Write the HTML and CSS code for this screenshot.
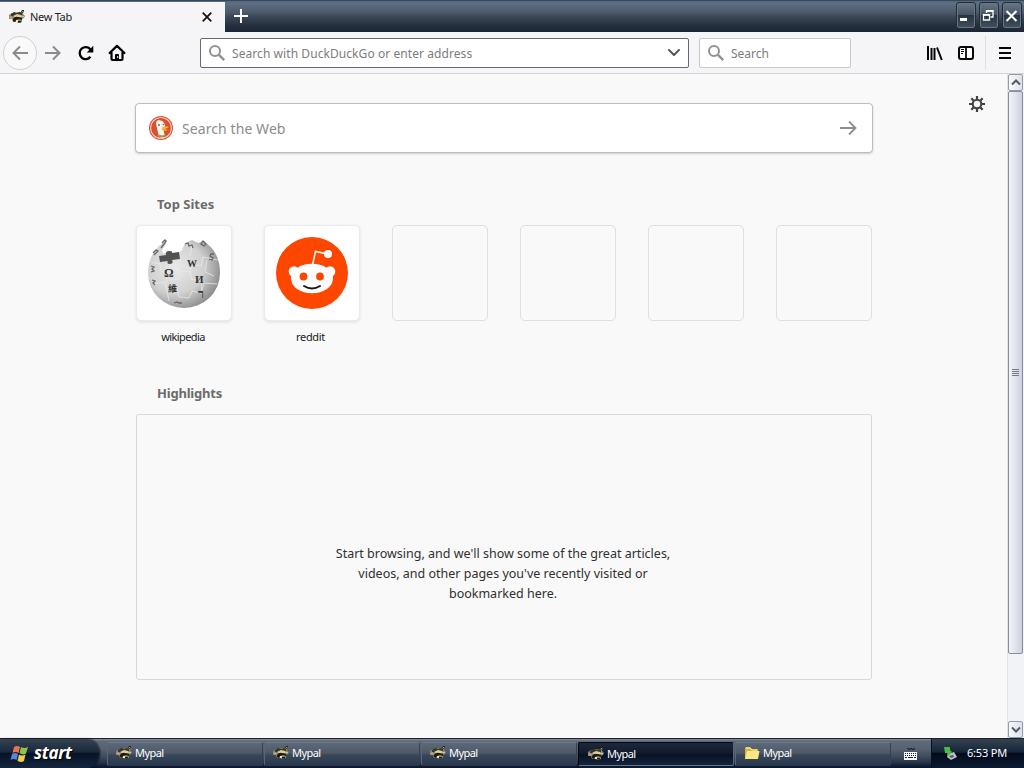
FILE: index.html
```html
<!DOCTYPE html>
<html lang="en">
<head>
<meta charset="utf-8">
<title>New Tab</title>
<link rel="stylesheet" href="styles.css">
</head>
<body>
<svg class="defs" width="0" height="0">
  <symbol id="mypal" viewBox="0 0 16 16">
    <path d="M0 6l3-2 3 0 3-1 3 0 2-2 1 0-1 4 2 2-1 2-2 1 0 3-3 1-3-1-3 0-1-3-3 0-1-2z" fill="#8a8768"/>
    <path d="M2 5l3-2 3 1 3-1 2 1 0 2-4 0-4 1-3 1z" fill="#3a382b"/>
    <path d="M4 7l4-2 4 1 1 2-3 0-3 1z" fill="#dccf98"/>
    <path d="M0 8l3-1 1 2-2 1z" fill="#c3a18c"/>
    <path d="M4 10q2-3 5-2l4 1 0 2-3-1-3 1-1 2-2-1zM9 12h3v1.500H9zM12 3l1-2 2 0-1 3z" fill="#1b1a13"/>
    <path d="M7 11h2v2H7zM13 7l2 0-1 1.500zM13 2l1 0-.5 1.500z" fill="#f0e6bd"/>
  </symbol>
  <symbol id="search" viewBox="0 0 18 18"><circle cx="7" cy="7" r="5" fill="none" stroke="#919191" stroke-width="2"/><path d="M10.7 10.7l5.5 5.500" stroke="#919191" stroke-width="2.4"/></symbol>
</svg>
<div class="window">
  <header class="titlebar">
    <div class="tab">
      <svg class="fav" width="16" height="16"><use href="#mypal"/></svg>
      <span class="tab-title">New Tab</span>
      <svg class="tab-close" width="10" height="10" viewBox="0 0 10 10"><path d="M.7.7l8.6 8.6M9.3.7L.7 9.3" stroke="#111" stroke-width="1.7"/></svg>
    </div>
    <svg class="new-tab" width="14" height="14" viewBox="0 0 14 14"><path d="M7 0v14M0 7h14" stroke="#fff" stroke-width="1.9"/></svg>
    <div class="controls">
      <span class="control"><svg width="18" height="26" viewBox="0 0 18 26"><path d="M3 15h7v3H3z" fill="#fff"/></svg></span>
      <span class="control"><svg width="18" height="26" viewBox="0 0 18 26"><path d="M6.500 10V8H13v6h-2.500M3.500 12v5h6v-5z" fill="none" stroke="#fff" stroke-width="1.300"/><path d="M2.900 11h7.200v1.600H2.900zM5.900 7h7.600v1.600H5.900z" fill="#fff"/></svg></span>
      <span class="control"><svg width="18" height="26" viewBox="0 0 18 26"><path d="M3.500 8l10 10M13.500 8l-10 10" stroke="#fff" stroke-width="2.100"/></svg></span>
    </div>
  </header>
  <nav class="toolbar">
    <span class="back"><svg width="16" height="16" viewBox="0 0 16 16"><path d="M16 8H1.500M8 1.500L1.500 8 8 14.500" fill="none" stroke="#8b8b8c" stroke-width="2"/></svg></span>
    <svg class="forward" width="16" height="16" viewBox="0 0 16 16"><path d="M0 8h14.500M8 1.500L14.500 8 8 14.500" fill="none" stroke="#8b8b8c" stroke-width="2"/></svg>
    <svg class="reload" width="16" height="16" viewBox="0 0 16 16"><path d="M12.500 11.700A6 6 0 1 1 12.500 4.500" fill="none" stroke="#000" stroke-width="2.300"/><path d="M15.300.8v6.700H8.800z"/></svg>
    <svg class="home" width="18" height="18" viewBox="0 0 18 18"><path d="M1.600 9L9 1.900 16.400 9M3.500 8.500V15q0 1 1 1h9q1 0 1-1V8.500" fill="none" stroke="#000" stroke-width="2.200" stroke-linecap="round" stroke-linejoin="round"/><path d="M7 16v-5q0-1 1-1h2q1 0 1 1v5z"/><path d="M9.200 12h1v2h-1z" fill="#fff"/></svg>
    <div class="urlbar">
      <svg width="18" height="18"><use href="#search"/></svg>
      <span class="url-text">Search with DuckDuckGo or enter address</span>
      <svg class="chev" width="12" height="8" viewBox="0 0 12 8"><path d="M1 1l5 5 5-5" fill="none" stroke="#555" stroke-width="1.900" stroke-linecap="round" stroke-linejoin="round"/></svg>
    </div>
    <div class="searchbar">
      <svg width="18" height="18"><use href="#search"/></svg>
      <span class="search-text">Search</span>
    </div>
    <svg class="library" width="16" height="16" viewBox="0 0 16 16"><path d="M1 1v14M4.500 3v12M7.500 3v12M10 2.500L14.800 15" stroke="#080808" stroke-width="2"/></svg>
    <svg class="sidebar-icon" width="16" height="14" viewBox="0 0 16 14"><rect x="1" y="1" width="14" height="12" rx="2" fill="#fff" stroke="#080808" stroke-width="2"/><path d="M8 1v12" stroke="#080808" stroke-width="1.800"/><path d="M3 3.500h3M3 5.500h3M3 7.500h2" stroke="#080808"/></svg>
    <span class="sep"></span>
    <svg class="burger" width="12" height="12" viewBox="0 0 12 12"><path d="M0 1h12M0 6h12M0 11h12" stroke="#050505" stroke-width="2"/></svg>
  </nav>
  <div class="viewport">
    <main class="page">
      <svg class="gear" width="16" height="16" viewBox="0 0 16 16"><circle cx="8" cy="8" r="4.300" fill="none" stroke="#424246" stroke-width="2.100"/><path d="M8 0v3M8 13v3M0 8h3M13 8h3M2.300 2.300l2.200 2.200M11.500 11.500l2.200 2.200M13.700 2.300l-2.200 2.200M4.500 11.500l-2.200 2.200" stroke="#424246" stroke-width="2.200"/></svg>
      <div class="web-search">
        <svg width="24" height="24" viewBox="0 0 24 24"><circle cx="12" cy="12" r="12" fill="#d9563a"/><circle cx="12" cy="12" r="10.800" fill="#f7d9cf"/><circle cx="12" cy="12" r="9.900" fill="#d9502f"/><path d="M10 21L7.500 10Q6 5 9.500 4l4 1q2.500 2 2.500 6l-1.500 3 1.500 7q-3 1.500-6 0z" fill="#f4f3e9"/><path d="M13 11.500q4-2 7-.5l-4 2 3 1q-3 1.500-6 0z" fill="#f5b52c"/><path d="M10 18.500l3 1 4-1-1 2.500-3 0-3 0z" fill="#7ea457"/><circle cx="10" cy="9" r=".9" fill="#41678b"/><circle cx="14.300" cy="8.500" r=".7" fill="#41678b"/></svg>
        <span class="web-text">Search the Web</span>
        <svg class="go" width="18" height="16" viewBox="0 0 18 16"><path d="M0 8h15.500M9 1.500L15.500 8 9 14.500" fill="none" stroke="#8d8d8f" stroke-width="1.800"/></svg>
      </div>
      <h2 class="heading sites-heading"><span>Top Sites</span></h2>
      <div class="sites">
        <div class="site"><div class="tile filled">
          <svg width="74" height="74" viewBox="0 0 74 74">
            <defs><radialGradient id="globe" cx=".38" cy=".4" r=".65"><stop offset="0" stop-color="#e9e9e9"/><stop offset=".6" stop-color="#d0d0d0"/><stop offset="1" stop-color="#8d8d8d"/></radialGradient></defs>
            <path d="M20 4L12 10Q1 21 1 37a36 35 0 0 0 72 0Q73 15 56 5l-5 2-6-3-7 3-3 7-3 3-16 0-1-3 4-6z" fill="url(#globe)"/>
            <path d="M4 26l9 2 1 7 8 1 1 8 9-1 2-8 9 1 2-8 9 2 2-9 15 3M6 48l11-2 3 8 10-2 2 9 10 1 3-7 9 2 3-10 13 1M32 22l2 8 9 2 1 11 10 2 1 13M21 36l-2 13 3 16M45 9l-2 11M60 24l-2 12 9 4" fill="none" stroke="#e9e9e9" stroke-width=".8"/>
            <path d="M12 20l7-1q-1-4 3-4 4 0 3 2l7-1 1 7-8 1q2 4-2 4-4 0-2-3l-8 1z" fill="#525252"/>
            <path d="M15 7l3-3 1 1-2 3-3 4M6 17l3-3 2 1-4 4M38 8l3-1 1 3 3-1 1 3M56 5l3 3-2 2-3-2zM67 18l-3 0-1 2 3 2-1 2-3-1M4 30l3 1-2 2 2 2-3 1M5 44l3 1-2 2 2 2M27 67l3-1 2 1 3 0" fill="none" stroke="#666" stroke-width="1.300"/>
            <g class="glyphs" fill="#343434"><text x="17" y="41" font-size="12">Ω</text><text x="40" y="31" font-size="10">W</text><text x="48" y="47" font-size="11">И</text><text x="51" y="62" font-size="12">ר</text><text class="cjk" x="21" y="56" font-size="9">維</text></g>
          </svg></div><span class="site-name">wikipedia</span></div>
        <div class="site"><div class="tile filled">
          <svg width="72" height="72" viewBox="0 0 72 72"><circle cx="36" cy="36" r="36" fill="#fd4701"/><g fill="#fff"><ellipse cx="36" cy="41.500" rx="21" ry="14.800"/><circle cx="18" cy="34.500" r="5.300"/><circle cx="54" cy="34.500" r="5.300"/><circle cx="52" cy="17" r="4"/></g><path d="M36.500 28l3-13.500 11 2.300" fill="none" stroke="#fff" stroke-width="1.500"/><circle cx="27.500" cy="39.500" r="3.900" fill="#fd4701"/><circle cx="44" cy="39.500" r="3.900" fill="#fd4701"/><path d="M28 49q8 5 16 0" fill="none" stroke="#171717" stroke-width="2" stroke-linecap="round"/></svg></div><span class="site-name">reddit</span></div>
        <div class="site"><div class="tile"></div></div>
        <div class="site"><div class="tile"></div></div>
        <div class="site"><div class="tile"></div></div>
        <div class="site"><div class="tile"></div></div>
      </div>
      <h2 class="heading high-heading"><span>Highlights</span></h2>
      <section class="empty"><p>Start browsing, and we'll show some of the great articles,<br>videos, and other pages you've recently visited or<br>bookmarked here.</p></section>
    </main>
    <aside class="scrollbar">
      <span class="arrow"><svg width="10" height="7" viewBox="0 0 10 7"><path d="M1 5.500l4-4 4 4" fill="none" stroke="#555a64" stroke-width="2"/></svg></span>
      <span class="thumb"><svg width="7" height="8" viewBox="0 0 7 8"><path d="M0 .5h7M0 2.500h7M0 4.500h7M0 6.500h7" stroke="#777b83"/></svg></span>
      <span class="track"></span>
      <span class="arrow"><svg width="10" height="7" viewBox="0 0 10 7"><path d="M1 1.500l4 4 4-4" fill="none" stroke="#555a64" stroke-width="2"/></svg></span>
    </aside>
  </div>
  <footer class="taskbar">
    <div class="start">
      <svg width="20" height="18" viewBox="0 0 20 18"><path d="M4 2q3-2 6 0L8.500 8q-3-2-6 0z" fill="#e9734e"/><path d="M11 2q3 2 7 0l-2 6.500q-3 2-6.500-.2z" fill="#8fc34e"/><path d="M2 9q3-2 6 0l-1.500 6q-3-2-6 0z" fill="#5788de"/><path d="M9 9.500q3 2 6.500 0L14 16q-3 2-6.500-.3z" fill="#edcf48"/></svg>
      <span>start</span>
    </div>
    <div class="tasks">
      <div class="task"><svg width="16" height="16"><use href="#mypal"/></svg><span>Mypal</span></div>
      <div class="task"><svg width="16" height="16"><use href="#mypal"/></svg><span>Mypal</span></div>
      <div class="task"><svg width="16" height="16"><use href="#mypal"/></svg><span>Mypal</span></div>
      <div class="task active"><svg width="16" height="16"><use href="#mypal"/></svg><span>Mypal</span></div>
      <div class="task"><svg width="16" height="16" viewBox="0 0 16 16"><path d="M1 3l1-1h4l2 2h6v10H1z" fill="#d6b443"/><path d="M1 14L3 6h12.500L14 14z" fill="#f8e783"/><path d="M2 3h4l2 2h5" fill="none" stroke="#fff3a2"/></svg><span>Mypal</span></div>
    </div>
    <svg class="keyboard" width="13" height="12" viewBox="0 0 13 12"><path d="M3 0l2 1.500 2-1 2 1 2-1" fill="none" stroke="#111"/><path d="M0 4h13v8H0z" fill="#f4f4f4"/><path d="M1 5.500h11M1 7.500h11" stroke="#222" stroke-dasharray="1 1"/><path d="M1 9.500h2M4 9.500h5M10 9.500h2" stroke="#222"/></svg>
    <div class="tray">
      <svg width="14" height="16" viewBox="0 0 14 16"><path d="M5 9l6-2 3 5-6 3-4-3z" fill="#b9c0bd"/><path d="M6 11l4-1 1 2-3 1z" fill="#555f61"/><path d="M1 2l6 0 0 3 2 2-4 4-1-3-2 0z" fill="#4cb94b"/></svg>
      <span>6:53 PM</span>
    </div>
  </footer>
</div>
</body>
</html>
```
FILE: styles.css
```css
* { box-sizing: border-box; }
body { margin: 0; font-family: "Noto Sans", "Open Sans", sans-serif; background: #f9f9f9; }
svg { display: block; flex: none; }
span { white-space: nowrap; }
.defs { position: absolute; }
.window { width: 1024px; height: 768px; display: flex; flex-direction: column; overflow: hidden; }

.titlebar { height: 32px; flex: none; display: flex; align-items: stretch; background: linear-gradient(#20293b 0, #53657b 1px, #5f7085 3px, #4d5b6c 12px, #3b4757 17px, #263140 25px, #1b2534 32px); }
.tab { width: 225px; margin-top: 2px; padding: 0 13px 0 9px; display: flex; align-items: center; background: #f5f5f7; }
.tab-title { margin: 0 0 1px 5px; font-size: 11px; letter-spacing: -.3px; color: #202020; }
.tab-close { margin-left: auto; }
.new-tab { margin: 9px 0 0 9px; }
.controls { margin-left: auto; display: flex; gap: 3px; padding: 2px 2px 2px 0; }
.control { width: 20px; height: 27px; border: 1px solid #222c39; border-radius: 3px; box-shadow: inset 0 0 0 1px #697686; background: linear-gradient(#687786, #455363 48%, #273340 50%, #43515f); }

.toolbar { height: 42px; flex: none; display: flex; align-items: center; padding: 0 13px 0 3px; background: #f5f5f7; border-bottom: 1px solid #d3d4d5; }
.back { width: 34px; height: 34px; border: 1px solid #d1d1d3; border-radius: 50%; display: grid; place-items: center; background: #f9f9fa; }
.forward { margin-left: 8px; }
.reload { margin-left: 16.500px; }
.home { margin-left: 14.500px; }
.urlbar { width: 489px; height: 30px; margin-left: 74px; padding: 0 8px 0 7px; border: 1px solid #636a76; border-radius: 2px; background: #fff; display: flex; align-items: center; }
.urlbar span, .searchbar span { font-size: 12px; color: #7c7c7e; margin: 1px 0 0 6px; }
.url-text { letter-spacing: .07px; }
.chev { margin-left: auto; }
.searchbar { width: 152px; height: 30px; margin-left: 10px; padding: 0 7px; border: 1px solid #c8c9cb; border-radius: 2px; background: #fff; display: flex; align-items: center; }
.library { margin-left: 76px; }
.sidebar-icon { margin-left: 15px; }
.sep { width: 1px; height: 34px; margin-left: 11px; background: #dedfe2; }
.burger { margin-left: auto; }

.viewport { flex: 1; min-height: 0; display: flex; background: #f9f9f9; }
.page { flex: 1; position: relative; padding: 29px 0 0 135px; }
.gear { position: absolute; right: 22px; top: 22px; }
.web-search { width: 738px; height: 50px; border: 1px solid #bdbdbf; border-radius: 4px; box-shadow: 0 1px 2px #ccc; background: #fff; display: flex; align-items: center; padding: 0 14px 0 13px; }
.web-text { margin-left: 9px; font-size: 14px; letter-spacing: .08px; color: #8b8b8d; }
.go { margin-left: auto; }
.heading { margin: 0 0 0 22px; font-size: 13px; line-height: 20px; font-weight: 700; color: #6b6b6b; }
.sites-heading { margin-top: 41px; }
.sites { display: flex; gap: 32px; margin: 11px 0 0 1px; height: 122px; }
.site { width: 96px; display: flex; flex-direction: column; align-items: center; }
.tile { width: 96px; height: 96px; flex: none; border: 1px solid #dfdfe0; border-radius: 5px; display: grid; place-items: center; }
.filled { background: #fff; border-color: #ebebec; box-shadow: 0 1px 3px #ddd; }
.glyphs { font-family: "Liberation Serif", serif; font-weight: bold; }
.cjk { font-family: "Noto Sans CJK TC", sans-serif; }
.site-name { font-size: 11px; letter-spacing: -.6px; line-height: 16px; margin-top: 8px; margin-right: 2px; color: #222; }
.site:nth-child(2) .site-name { letter-spacing: -.3px; margin-right: 3px; }
.high-heading { margin-top: 36px; letter-spacing: -.2px; }
.empty { width: 736px; height: 266px; margin: 11px 0 0 1px; border: 1px solid #d8d8da; border-radius: 3px; padding-top: 129px; text-align: center; }
.empty p { margin: 0; font-size: 12.500px; line-height: 20px; color: #303030; padding-right: 2px; }
.scrollbar { width: 17px; padding-right: 1px; display: flex; flex-direction: column; background: #f1f3f7; border-left: 1px solid #dfe2e6; }
.arrow { height: 17px; border: 1px solid #929dac; border-radius: 2px; background: linear-gradient(90deg, #f8fafc, #dce1eb); display: grid; place-items: center; }
.thumb { height: 563px; border: 1px solid #858e9e; border-radius: 2px; background: linear-gradient(90deg, #f0f3f8, #dbe0ea 60%, #cbd2df); display: grid; place-items: center; }
.track { flex: 1; }

.taskbar { height: 30px; flex: none; display: flex; border-top: 1px solid #1c222b; background: linear-gradient(#8791a0 0, #5e6a79 2px, #566171 10px, #414d5d 17px, #27364a 23px, #0b182b 28px); color: #fff; font-size: 11px; }
.start { width: 99px; border-radius: 0 13px 13px 0 / 0 15px 15px 0; background: linear-gradient(#354352, #19283b 45%, #071326 50%, #13253d); box-shadow: 1px 0 2px #071020; display: flex; align-items: center; padding-left: 10px; }
.start span { margin-left: 4px; font: italic bold 17px "Open Sans", "Noto Sans", sans-serif; letter-spacing: -.3px; text-shadow: 1px 1px 1px #000; padding-bottom: 2px; }
.tasks { display: flex; margin-left: 8px; gap: 1px; padding: 3px 0 2px; }
.task { width: 156px; border: 1px solid; border-color: #6d7988 #344151 #2a394d #5a6675; border-radius: 2px; background: linear-gradient(#5d6978, #4d5969 45%, #394657 55%, #28384e); display: flex; align-items: center; padding: 0 0 3px 8px; }
.task span { margin-left: 3px; letter-spacing: -.55px; }
.active { background: linear-gradient(#1d293a, #101b2d 45%, #071123 55%, #14253f); border-color: #030812 #58677b #65748a #030812; padding: 0 0 1px 9px; }
.keyboard { margin: 9px 0 0 13px; }
.tray { margin-left: auto; width: 93px; display: flex; align-items: center; padding: 0 0 2px 11px; border-left: 1px solid #08101b; background: linear-gradient(#354351, #162538 45%, #020b1c 50%, #0c1a30); }
.tray span { margin-left: 10px; letter-spacing: -.2px; }
```
